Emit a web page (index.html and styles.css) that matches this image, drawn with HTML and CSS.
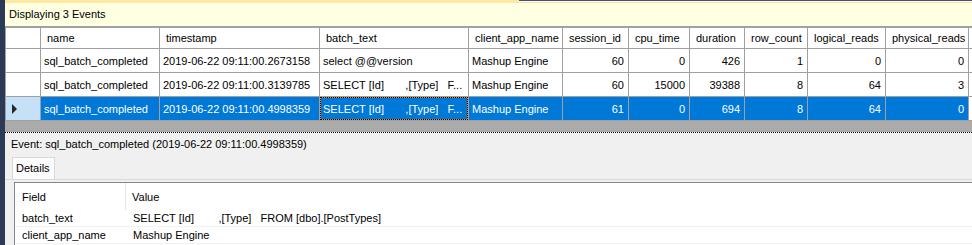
FILE: index.html
```html
<!DOCTYPE html>
<html lang="en">

<head>
    <meta charset="UTF-8">
    <title>Extended Events - Live Data</title>
    <link rel="stylesheet" href="styles.css">
</head>

<body>
    <div class="window">
        <div class="doc-tab">
            <span class="doc-tab-active"></span>
            <span class="doc-tab-rest"></span>
        </div>
        <div class="info">Displaying 3 Events</div>

        <div class="grid">
            <div class="hd corner"></div>
            <div class="hd">name</div>
            <div class="hd">timestamp</div>
            <div class="hd">batch_text</div>
            <div class="hd">client_app_name</div>
            <div class="hd">session_id</div>
            <div class="hd">cpu_time</div>
            <div class="hd">duration</div>
            <div class="hd">row_count</div>
            <div class="hd">logical_reads</div>
            <div class="hd">physical_reads</div>
            <div class="hd filler"></div>

            <div class="rh"></div>
            <div class="c">sql_batch_completed</div>
            <div class="c">2019-06-22 09:11:00.2673158</div>
            <div class="c">select @@version</div>
            <div class="c">Mashup Engine</div>
            <div class="c num">60</div>
            <div class="c num">0</div>
            <div class="c num">426</div>
            <div class="c num">1</div>
            <div class="c num">0</div>
            <div class="c num">0</div>
            <div class="c filler"></div>

            <div class="rh"></div>
            <div class="c">sql_batch_completed</div>
            <div class="c">2019-06-22 09:11:00.3139785</div>
            <div class="c pre">SELECT [Id]       ,[Type]   F...</div>
            <div class="c">Mashup Engine</div>
            <div class="c num">60</div>
            <div class="c num">15000</div>
            <div class="c num">39388</div>
            <div class="c num">8</div>
            <div class="c num">64</div>
            <div class="c num">3</div>
            <div class="c filler"></div>

            <div class="rh current"><span class="arrow"></span></div>
            <div class="c sel">sql_batch_completed</div>
            <div class="c sel">2019-06-22 09:11:00.4998359</div>
            <div class="c sel pre focus">SELECT [Id]       ,[Type]   F...</div>
            <div class="c sel">Mashup Engine</div>
            <div class="c sel num">61</div>
            <div class="c sel num">0</div>
            <div class="c sel num">694</div>
            <div class="c sel num">8</div>
            <div class="c sel num">64</div>
            <div class="c sel num">0</div>
            <div class="c filler"></div>
        </div>
        <div class="grid-empty"></div>
        <div class="splitter"></div>

        <div class="details-pane">
            <div class="event-title">Event: sql_batch_completed (2019-06-22 09:11:00.4998359)</div>
            <div class="tabs">
                <div class="tab">Details</div>
            </div>
            <div class="tab-page">
                <div class="fields">
                    <div class="fields-head">
                        <div class="f-name">Field</div>
                        <div class="f-value">Value</div>
                    </div>
                    <div class="fields-row">
                        <div class="f-name">batch_text</div>
                        <div class="f-value pre">SELECT [Id]        ,[Type]   FROM [dbo].[PostTypes]</div>
                    </div>
                    <div class="fields-row">
                        <div class="f-name">client_app_name</div>
                        <div class="f-value">Mashup Engine</div>
                    </div>
                </div>
            </div>
        </div>
    </div>
</body>

</html>
```

FILE: styles.css
```css
body {
    margin: 0;
    background-color: #2b3a57;
    font-family: "Liberation Sans", Arial, sans-serif;
    font-size: 11px;
    color: #000;
    overflow: hidden;
}

.window {
    margin-left: 5px;
    height: 245px;
    background-color: #f0f0f0;
}

.doc-tab {
    display: flex;
    height: 3px;
    background-color: #ffffe1;
}

.doc-tab-active {
    width: 514px;
    background-color: #fde8a2;
}

.doc-tab-rest {
    flex: 1;
    border-top: 1px solid #3f5179;
    border-bottom: 1px solid #f3e2a4;
}

.info {
    height: 23px;
    line-height: 23px;
    padding-left: 4px;
    background-color: #ffffe1;
}

.grid {
    display: grid;
    grid-template-columns: 34px 118px 159px 148px 93px 65px 60px 54px 62px 77px 82px 1fr;
    grid-template-rows: 20px 23px 23px 23px;
    gap: 1px;
    background-color: #a0a0a0;
    border-top: 2px solid #a0a0a0;
    border-left: 1px solid #a0a0a0;
    border-bottom: 1px solid #a0a0a0;
}

.hd,
.c,
.rh {
    display: flex;
    align-items: center;
    background-color: #fff;
    white-space: nowrap;
    overflow: hidden;
}

.hd {
    padding-left: 6px;
}

.c {
    padding-left: 3px;
    padding-right: 4px;
}

.num {
    justify-content: flex-end;
}

.pre {
    white-space: pre;
}

.filler {
    padding: 0;
}

.sel {
    background-color: #0078d7;
    color: #fff;
}

.focus {
    border: 1px solid #e8862a;
    outline: 1px dotted #000;
    outline-offset: -1px;
    padding-left: 2px;
}

.rh.current {
    background-color: #c5e1f7;
    padding-left: 6px;
}

.arrow {
    width: 0;
    height: 0;
    border-left: 5px solid #262626;
    border-top: 5px solid transparent;
    border-bottom: 5px solid transparent;
}

.grid-empty {
    height: 11px;
    background-color: #ababab;
}

.splitter {
    height: 1px;
    background: repeating-linear-gradient(90deg, #000 0 1px, #fff 1px 2px);
}

.details-pane {
    background-color: #f0f0f0;
}

.event-title {
    height: 24px;
    line-height: 13px;
    padding-top: 5px;
    padding-left: 6px;
    box-sizing: border-box;
}

.tabs {
    display: flex;
    height: 22px;
    padding-left: 7px;
}

.tab {
    width: 43px;
    box-sizing: border-box;
    padding-left: 3px;
    line-height: 21px;
    background-color: #fcfcfc;
    border: 1px solid #d9d9d9;
    border-bottom: none;
}

.tab-page {
    border-top: 1px solid #d9d9d9;
    padding-top: 2px;
    padding-left: 9px;
}

.fields {
    background-color: #fff;
    border-top: 1px solid #828790;
    border-left: 1px solid #828790;
    height: 70px;
}

.fields-head,
.fields-row {
    display: flex;
}

.fields-head {
    height: 27px;
    align-items: center;
}

.fields-row {
    height: 16px;
    line-height: 16px;
    border-bottom: 1px solid #f0f0f0;
}

.f-name {
    width: 111px;
    padding-left: 7px;
    box-sizing: border-box;
}

.fields-head .f-name {
    height: 100%;
    display: flex;
    align-items: center;
    border-right: 1px solid #e5e5e5;
}

.f-value {
    padding-left: 6px;
}

.fields-row .f-value {
    padding-left: 7px;
}
```
